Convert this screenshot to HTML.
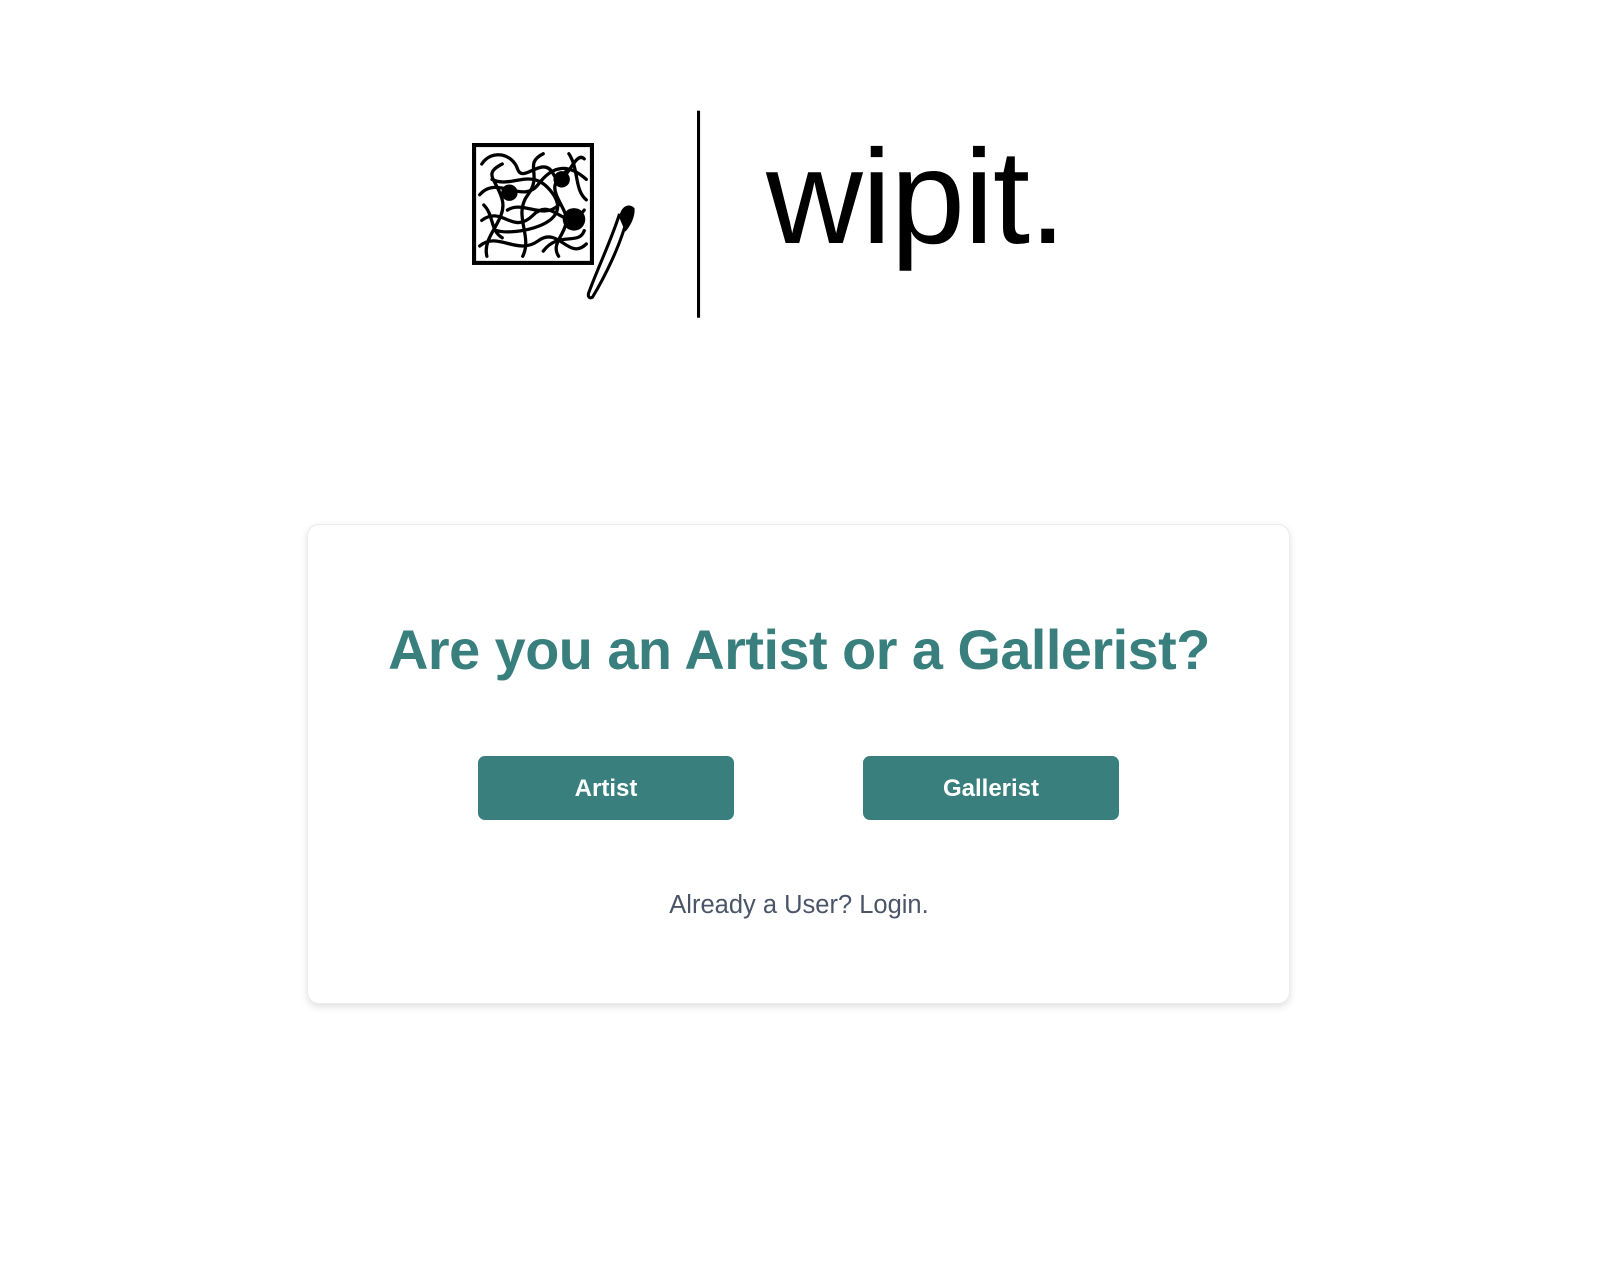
<!DOCTYPE html>
<html><head><meta charset="utf-8"><style>
html,body{margin:0;padding:0;background:#fff;width:1602px;height:1276px;overflow:hidden;position:relative;font-family:"Liberation Sans",sans-serif}
.card{position:absolute;left:307px;top:524px;width:981px;height:478px;border:1px solid #e8ebf0;border-radius:12px;box-shadow:0 3px 8px rgba(0,0,0,0.12);background:#fff}
h1{position:absolute;left:0;right:0;top:617px;margin:0;text-align:center;font-size:55.8px;font-weight:bold;color:#387f7d;letter-spacing:-0.5px;padding-right:4px}
.btn{position:absolute;top:756px;width:256px;height:64px;background:#387f7d;border-radius:7px;color:#fff;font-size:24px;font-weight:bold;text-align:center;line-height:66px}
.login{position:absolute;left:0;right:0;top:891px;text-align:center;font-size:25.5px;color:#4a5568;padding-right:4px}
.wipit{position:absolute;left:766px;top:131px;font-size:134px;color:#000;letter-spacing:-1px;line-height:1}
</style></head><body>
<svg style="position:absolute;left:0;top:0" width="1602" height="400">
<g transform="scale(1.025)">
<rect x="462.5" y="141.5" width="115" height="115" fill="none" stroke="#000" stroke-width="4"/>
<g fill="none" stroke="#000" stroke-width="3.2" stroke-linecap="round">
<path d="M470 160 C480 145 500 150 505 165 S530 150 540 170 S560 145 570 155"/>
<path d="M468 190 C485 170 510 200 525 180 S555 160 572 175"/>
<path d="M470 215 C490 200 500 230 520 210 S550 230 570 205"/>
<path d="M468 240 C485 225 505 250 525 235 S555 255 572 238"/>
<path d="M475 250 C470 230 495 215 490 195 S470 170 490 160"/>
<path d="M510 250 C520 230 500 210 515 190 S510 160 530 150"/>
<path d="M545 250 C535 235 560 225 550 205 S535 180 555 165"/>
<path d="M480 175 C500 185 520 160 540 190 S500 230 485 225"/>
<path d="M530 245 C545 225 565 240 570 225"/>
<path d="M495 205 C510 195 530 215 545 200"/>
<path d="M472 200 C482 210 478 225 490 232 M555 150 C565 165 560 185 572 195"/>
</g>
<circle cx="497" cy="188" r="8" fill="#000"/>
<circle cx="560" cy="214" r="11" fill="#000"/>
<circle cx="548" cy="175" r="8" fill="#000"/>
<path d="M612 212 C606 238 590 270 578 290 C574 292 573 288 575 284 C583 262 596 235 604 210 Z" fill="none" stroke="#000" stroke-width="3"/>
<path d="M604 212 C606 200 614 198 619 203 C620 212 614 222 610 226 Z" fill="#000"/>
<rect x="680" y="108" width="3" height="202" fill="#000"/>
</g>
</svg>
<div class="wipit">wipit.</div>
<div class="card"></div>
<h1>Are you an Artist or a Gallerist?</h1>
<div class="btn" style="left:478px">Artist</div>
<div class="btn" style="left:863px">Gallerist</div>
<div class="login">Already a User? Login.</div>
</body></html>
